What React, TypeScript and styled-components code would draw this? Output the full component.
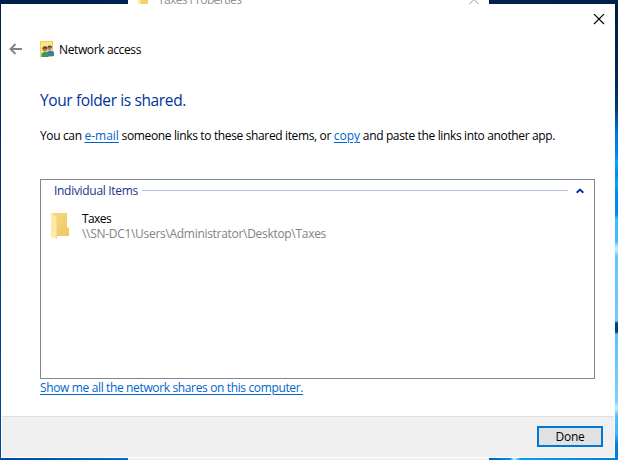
import React from "react";
import styled, { createGlobalStyle } from "styled-components";

const GlobalStyle = createGlobalStyle`
  * { box-sizing: border-box; }
  body { margin: 0; overflow: hidden; }
`;

const Desktop = styled.div`
  width: 618px;
  height: 460px;
  display: grid;
  grid-template-columns: 1px 614px 3px;
  grid-template-rows: 4px 454px 2px;
  overflow: hidden;
  font-family: "Open Sans", "Noto Sans", sans-serif;
  font-size: 12px;
  line-height: 16px;
  color: #000;
`;

const TopStrip = styled.div`
  grid-column: 1 / -1;
  display: flex;
  overflow: hidden;
  background: linear-gradient(90deg, #001d49, #002550 30%, #00214b);
`;

const PropertiesWindow = styled.div`
  margin-left: 128px;
  width: 361px;
  height: 4px;
  padding: 0 10px;
  display: flex;
  align-items: flex-end;
  background: #fff;
  color: #929292;
  overflow: hidden;
`;

const PropertiesIcon = styled.span`
  width: 10px;
  height: 4px;
  background: linear-gradient(90deg, #ffe9a2 30%, #f5d16c 35%);
`;

const PropertiesTitle = styled.span`
  margin-left: 10px;
  height: 16px;
  line-height: 16px;
  letter-spacing: -0.62px;
  transform: translateY(4px);
`;

const PropertiesClose = styled.svg`
  margin-left: auto;
  margin-right: -1px;
`;

const LeftEdge = styled.div`
  background: linear-gradient(#001d49, #00438a 70%, #004c91);
`;

const RightEdge = styled.div`
  background: linear-gradient(
    #001a40 0, #002654 75px, #003c7c 105px, #0078df 130px, #0089ee 153px,
    #00afff 158px, #0087ed 170px, #00a9f6 180px, #008bed 188px, #0088e9 210px,
    #3ebcff 215px, #45bdff 238px, #a9e8ff 242px, #b8f0ff 246px, #61c6ff 252px,
    #71c9ff 317px, #00427f 319px, #00427f 328px, #5bc1ff 330px, #7bd0ff 397px,
    #b8f4ff 404px, #54bcff 412px, #3eb4ff 430px, #007de0 440px, #0081e1 454px
  );
`;

const BottomStrip = styled.div`
  grid-column: 1 / -1;
  display: grid;
  grid-template-columns: 128px 361px 1fr;
  background: linear-gradient(90deg, #004b91, #006bc9 120px, #0062b8 490px, #008aec 510px, #d5f8ff 514px, #00a1f6 520px, #007fdc);
`;

const BehindFooter = styled.div`
  grid-column: 2;
  background: #f0f0f0;
`;

const Dialog = styled.main`
  display: flex;
  flex-direction: column;
  background: #fff;
`;

const TitleBar = styled.div`
  height: 33px;
  display: flex;
  justify-content: flex-end;
  padding: 10px 10px 0 0;
`;

const Header = styled.header`
  height: 24px;
  display: flex;
  align-items: center;
  padding-left: 8px;
`;

const ShareIcon = styled.svg`
  margin-left: 17px;
`;

const Caption = styled.span<{ $spacing: number }>`
  letter-spacing: ${(p) => p.$spacing}px;
  white-space: nowrap;
`;

const HeaderCaption = styled(Caption)`
  margin-left: 5px;
  padding-top: 2px;
`;

const Body = styled.section`
  height: 351px;
  padding: 29px 20px 0 39px;
  display: flex;
  flex-direction: column;
  align-items: flex-start;
`;

const Heading = styled.h1`
  margin: 0;
  height: 20px;
  font-size: 15.5px;
  font-weight: 400;
  line-height: 20px;
  letter-spacing: -0.38px;
  color: #003399;
  white-space: nowrap;
`;

const Message = styled.p`
  margin: 18px 0 0;
  height: 16px;
  letter-spacing: -0.36px;
  white-space: nowrap;
`;

const Link = styled.a`
  color: #0066cc;
  letter-spacing: 0;
  text-decoration: underline;
  text-decoration-thickness: 1px;
  text-underline-offset: 2px;
`;

const SharesLink = styled(Link)`
  margin-top: 1px;
  letter-spacing: -0.36px;
  white-space: nowrap;
`;

const ItemList = styled.div`
  margin-top: 35px;
  width: 555px;
  height: 200px;
  flex: none;
  border: 1px solid #828790;
  display: flex;
  flex-direction: column;
`;

const GroupHeader = styled.div`
  height: 22px;
  display: flex;
  align-items: center;
  padding: 0 10px 0 13px;
  color: #1e3287;
`;

const Rule = styled.span`
  flex: none;
  width: 426px;
  height: 1px;
  margin: 0 8px 1px auto;
  background: #b0c4e2;
`;

const Item = styled.div`
  margin-top: 9px;
  display: flex;
  padding-left: 10px;
`;

const ItemText = styled.div`
  margin-left: 12px;
  display: flex;
  flex-direction: column;
  line-height: 15px;
`;

const ItemPath = styled(Caption)`
  color: #838383;
`;

const Footer = styled.footer`
  flex: none;
  width: 612px;
  height: 41px;
  margin: 4px 1px 1px;
  border-top: 1px solid #dfdfdf;
  background: #f0f0f0;
  display: flex;
  justify-content: flex-end;
  padding: 9px 11px 0 0;
`;

const Button = styled.button`
  width: 66px;
  height: 21px;
  padding: 0;
  border: 2px solid #0078d7;
  background: #e1e1e1;
  color: #000;
  font: inherit;
  line-height: 17px;
  letter-spacing: -0.2px;
`;

const BackArrow = () => (
  <svg width="14" height="12" viewBox="0 0 14 12" fill="none" stroke="#838383" strokeWidth="1.8">
    <path d="M1.5 6H13M6.5 1L1.5 6L6.5 11" />
  </svg>
);

const CloseIcon = () => (
  <svg width="12" height="12" viewBox="0 0 12 12" fill="none" stroke="#000" strokeWidth="1.1">
    <path d="M1 0L11 10M11 0L1 10" />
  </svg>
);

const PeopleFolder = () => (
  <ShareIcon width="14" height="16" viewBox="0 0 14 16">
    <rect width="13" height="16" fill="#f3cd4b" />
    <rect x="1" y="1" width="11" height="14" fill="#fce48c" />
    <circle cx="9.6" cy="7.1" r="2.1" fill="#b58356" />
    <path d="M7.4 7Q7.4 4.6 9.7 4.6T12 7Q9.8 5.6 7.4 7" fill="#52432f" />
    <path d="M6.7 15V11.2Q9.8 7.8 14 11V15Z" fill="#357fae" />
    <circle cx="5" cy="8.2" r="2.3" fill="#b88155" />
    <path d="M2.5 8.5Q2.3 5.4 5 5.3T7.4 8.2Q4.8 6.6 2.5 8.5" fill="#554832" />
    <path d="M1.6 16V12.6Q5 9 8.5 12.6V16Z" fill="#3b9860" />
  </ShareIcon>
);

const FolderIcon = () => (
  <svg width="19" height="28" viewBox="0 0 19 28">
    <defs>
      <linearGradient id="folderBack" x1="0" x2="1" y1="0" y2="1">
        <stop stopColor="#f7d989" />
        <stop offset="1" stopColor="#efc85f" />
      </linearGradient>
    </defs>
    <path d="M0 2H16V16L18 17V25H4L0 21Z" fill="url(#folderBack)" />
    <path d="M0 2L6 7V28L0 25.5Z" fill="#ffe9a7" />
    <path d="M5.5 7V28" stroke="#f5dc95" />
  </svg>
);

const Chevron = () => (
  <svg width="8" height="6" viewBox="0 0 8 6" fill="none" stroke="#003399" strokeWidth="2">
    <path d="M0.7 4.7L4 1.6L7.3 4.7" />
  </svg>
);

export default function App() {
  return (
    <>
      <GlobalStyle />
      <Desktop>
        <TopStrip>
          <PropertiesWindow>
            <PropertiesIcon />
            <PropertiesTitle>Taxes Properties</PropertiesTitle>
            <PropertiesClose width="12" height="4" viewBox="0 0 12 4" fill="none" stroke="#999">
              <path d="M1 4.5L6 -0.5L11 4.5" />
            </PropertiesClose>
          </PropertiesWindow>
        </TopStrip>
        <LeftEdge />
        <Dialog>
          <TitleBar><CloseIcon /></TitleBar>
          <Header>
            <BackArrow />
            <PeopleFolder />
            <HeaderCaption $spacing={-0.37}>Network access</HeaderCaption>
          </Header>
          <Body>
            <Heading>Your folder is shared.</Heading>
            <Message>
              You can <Link>e-mail</Link> someone links to these shared items, or <Link>copy</Link> and paste the links into another app.
            </Message>
            <ItemList>
              <GroupHeader>
                <Caption $spacing={-0.3}>Individual Items</Caption>
                <Rule />
                <Chevron />
              </GroupHeader>
              <Item>
                <FolderIcon />
                <ItemText>
                  <Caption $spacing={-0.6}>Taxes</Caption>
                  <ItemPath $spacing={-0.3}>{"\\\\SN-DC1\\Users\\Administrator\\Desktop\\Taxes"}</ItemPath>
                </ItemText>
              </Item>
            </ItemList>
            <SharesLink>Show me all the network shares on this computer.</SharesLink>
          </Body>
          <Footer><Button>Done</Button></Footer>
        </Dialog>
        <RightEdge />
        <BottomStrip><BehindFooter /></BottomStrip>
      </Desktop>
    </>
  );
}
